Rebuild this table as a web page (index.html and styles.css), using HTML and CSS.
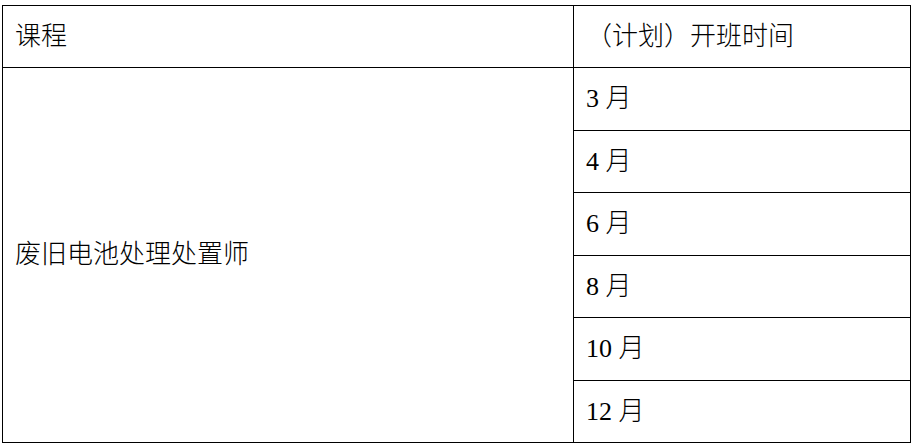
FILE: index.html
```html
<!DOCTYPE html>
<html lang="zh-CN">
<head>
<meta charset="utf-8">
<title>课程开班时间</title>
<link rel="stylesheet" href="styles.css">
</head>
<body>
<table class="plan">
  <colgroup>
    <col class="c-course">
    <col class="c-time">
  </colgroup>
  <tr class="r-head">
    <td>课程</td>
    <td>（计划）开班时间</td>
  </tr>
  <tr class="r-a">
    <td rowspan="6" class="course">废旧电池处理处置师</td>
    <td>3 月</td>
  </tr>
  <tr class="r-b"><td>4 月</td></tr>
  <tr class="r-a"><td>6 月</td></tr>
  <tr class="r-b"><td>8 月</td></tr>
  <tr class="r-a"><td>10 月</td></tr>
  <tr class="r-b"><td>12 月</td></tr>
</table>
</body>
</html>
```
FILE: styles.css
```css
html, body {
  margin: 0;
  background: #fff;
}
body {
  padding: 5px 0 0 2px;
}
.plan {
  border-collapse: collapse;
  width: 909px;
  table-layout: fixed;
  font-family: "Liberation Serif", "Noto Sans CJK SC", serif;
  font-size: 26px;
  font-weight: 300;
  color: #000;
}
.c-course { width: 571px; }
.plan td {
  border: 1px solid #000;
  padding: 0 12px;
  vertical-align: middle;
  line-height: 1;
  white-space: nowrap;
}
.r-head { height: 62px; }
.r-a { height: 63px; }
.r-b { height: 62px; }
```
